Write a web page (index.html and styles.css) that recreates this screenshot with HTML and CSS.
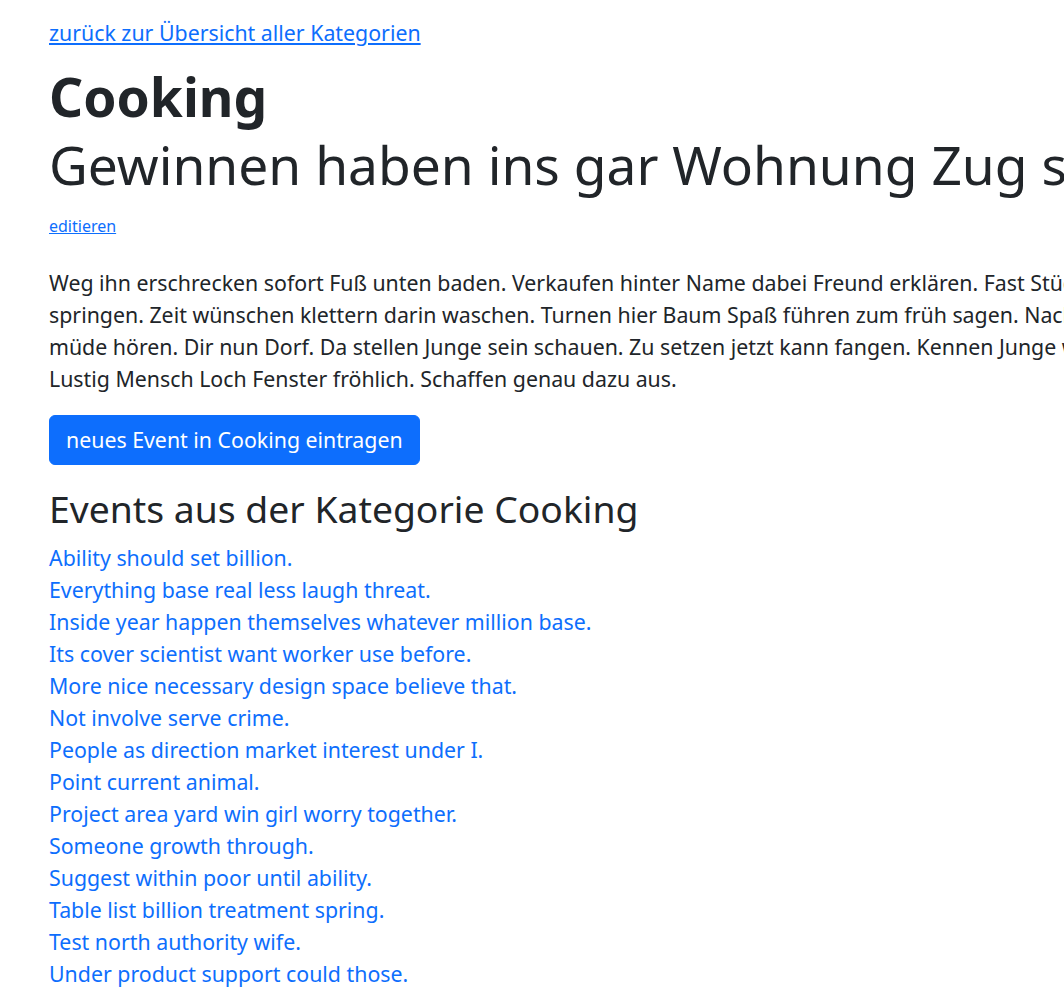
FILE: index.html
```html
<!DOCTYPE html>
<html lang="de">
<head>
<meta charset="UTF-8">
<meta name="viewport" content="width=device-width, initial-scale=1.0">
<title>Cooking</title>
<link rel="stylesheet" href="styles.css">
</head>
<body>

<div class="container">
  <a href="#" class="back">zurück zur Übersicht aller Kategorien</a>

  <h1 class="title">
    <b>Cooking</b>
    <span class="subtitle">Gewinnen haben ins gar Wohnung Zug sehen.</span>
  </h1>
  <div class="edit-row">
    <a href="#">editieren</a>
  </div>

  <p class="description">
    Weg ihn erschrecken sofort Fuß unten baden. Verkaufen hinter Name dabei Freund erklären. Fast Stück Wasser nun<br>
    springen. Zeit wünschen klettern darin waschen. Turnen hier Baum Spaß führen zum früh sagen. Nach Schule gehen<br>
    müde hören. Dir nun Dorf. Da stellen Junge sein schauen. Zu setzen jetzt kann fangen. Kennen Junge wohnen leben<br>
    Lustig Mensch Loch Fenster fröhlich. Schaffen genau dazu aus.
  </p>

  <div class="actions">
    <a href="#" class="btn">neues Event in Cooking eintragen</a>
  </div>

  <h2 class="section">Events aus der Kategorie Cooking</h2>
  <div class="events">
    <a href="#">Ability should set billion.</a>
    <a href="#">Everything base real less laugh threat.</a>
    <a href="#">Inside year happen themselves whatever million base.</a>
    <a href="#">Its cover scientist want worker use before.</a>
    <a href="#">More nice necessary design space believe that.</a>
    <a href="#">Not involve serve crime.</a>
    <a href="#">People as direction market interest under I.</a>
    <a href="#">Point current animal.</a>
    <a href="#">Project area yard win girl worry together.</a>
    <a href="#">Someone growth through.</a>
    <a href="#">Suggest within poor until ability.</a>
    <a href="#">Table list billion treatment spring.</a>
    <a href="#">Test north authority wife.</a>
    <a href="#">Under product support could those.</a>
  </div>
</div>

</body>
</html>
```

FILE: styles.css
```css
html {
  overflow: hidden;
}

body {
  font-family: "Noto Sans", sans-serif;
  font-size: 21.33px;
  line-height: 32px;
  color: #212529;
  background-color: #fff;
  margin: 0;
}

a {
  color: #0d6efd;
}

.container {
  width: 1600px;
  padding: 17px 0 0 49px;
}

.title {
  font-size: 53.3px;
  line-height: 68px;
  font-weight: 400;
  margin: 14px 0 15px 0;
  white-space: nowrap;
}

.title b {
  display: block;
  font-weight: 700;
}

.subtitle {
  display: block;
}

.edit-row {
  font-size: 16px;
  line-height: 24px;
}

.description {
  margin: 29px 0 20px 0;
  white-space: nowrap;
}

.actions {
  margin-bottom: 22px;
}

.btn {
  display: inline-block;
  background-color: #0d6efd;
  color: white;
  text-decoration: none;
  padding: 8px 16px;
  border: 1px solid #0d6efd;
  border-radius: 6px;
}

.section {
  font-size: 37.3px;
  line-height: 1.2;
  font-weight: 400;
  margin: 0 0 10px 0;
}

.events a {
  display: block;
  text-decoration: none;
}
```
